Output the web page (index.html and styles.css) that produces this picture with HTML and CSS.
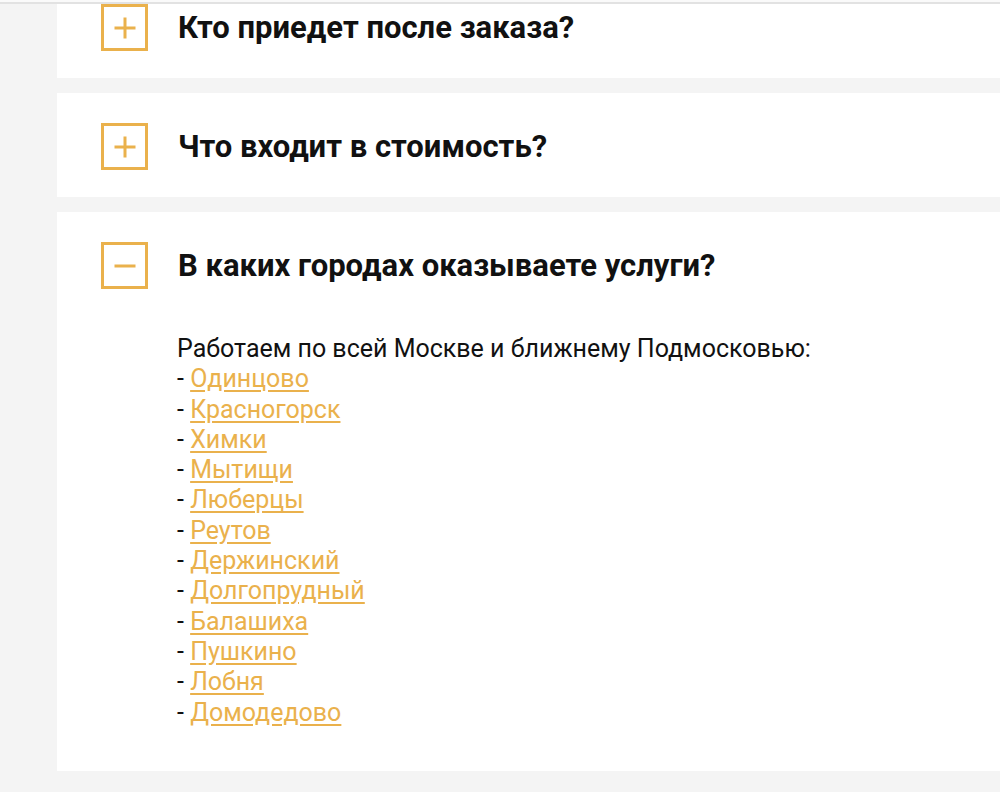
FILE: index.html
```html
<!DOCTYPE html>
<html lang="ru">
<head>
<meta charset="utf-8">
<link rel="stylesheet" href="styles.css">
</head>
<body>
<div class="topbar"></div>
<div class="faq">
  <div class="item">
    <div class="q">
      <span class="toggle plus"></span>
      <h3>Кто приедет после заказа?</h3>
    </div>
  </div>
  <div class="item">
    <div class="q">
      <span class="toggle plus"></span>
      <h3>Что входит в стоимость?</h3>
    </div>
  </div>
  <div class="item open">
    <div class="q">
      <span class="toggle minus"></span>
      <h3>В каких городах оказываете услуги?</h3>
    </div>
    <div class="a">
      Работаем по всей Москве и ближнему Подмосковью:<br>
      - <a href="#">Одинцово</a><br>
      - <a href="#">Красногорск</a><br>
      - <a href="#">Химки</a><br>
      - <a href="#">Мытищи</a><br>
      - <a href="#">Люберцы</a><br>
      - <a href="#">Реутов</a><br>
      - <a href="#">Держинский</a><br>
      - <a href="#">Долгопрудный</a><br>
      - <a href="#">Балашиха</a><br>
      - <a href="#">Пушкино</a><br>
      - <a href="#">Лобня</a><br>
      - <a href="#">Домодедово</a>
    </div>
  </div>
</div>
</body>
</html>
```
FILE: styles.css
```css
html, body {
  margin: 0;
  padding: 0;
  height: 100%;
  overflow: hidden;
}
body {
  background: #f4f4f4;
  font-family: Roboto, "Noto Sans", sans-serif;
  color: #111;
}
.topbar {
  position: fixed;
  top: 0;
  left: 0;
  right: 0;
  height: 2px;
  background: #fafafa;
  border-bottom: 2px solid #e2e2e2;
  z-index: 2;
}
.faq {
  margin: -26px 0 0 57px;
  display: flex;
  flex-direction: column;
  gap: 15px;
}
.item {
  background: #fff;
  padding: 30px 0 27px 44px;
}
.q {
  display: flex;
  align-items: center;
  gap: 30px;
}
.q h3 {
  margin: 0;
  font-size: 31px;
  font-weight: 700;
  letter-spacing: 0;
}
.toggle {
  position: relative;
  width: 41px;
  height: 41px;
  border: 3px solid #eab14c;
  flex: none;
}
.toggle::before,
.toggle::after {
  content: "";
  position: absolute;
  background: #eab14c;
  left: 50%;
  top: 50%;
}
.toggle::before {
  width: 21px;
  height: 3px;
  transform: translate(-50%, -50%);
}
.plus::after {
  width: 3px;
  height: 21px;
  transform: translate(-50%, -50%);
}
.item.open {
  padding-bottom: 43px;
}
.a {
  margin-top: 45px;
  padding-left: 76px;
  font-size: 25px;
  line-height: 30.3px;
}
.a a {
  color: #eab14c;
  text-decoration: underline;
  text-underline-offset: 3px;
}
```
